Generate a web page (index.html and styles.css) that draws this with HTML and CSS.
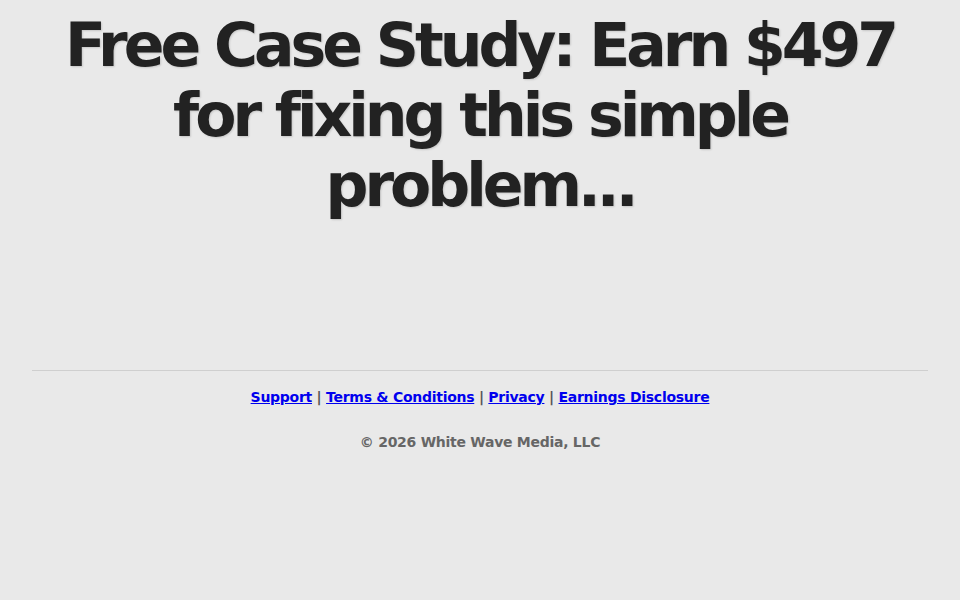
FILE: index.html
```html
<!DOCTYPE html>
<html>
<head>
<meta charset="utf-8">
<link rel="stylesheet" href="styles.css">
</head>
<body>
<div class="page">
  <h1 class="headline">Free Case Study: Earn $497 for fixing this simple problem...</h1>
  <div class="spacer"></div>
  <footer class="footer">
    <p class="links"><a href="#">Support</a> | <a href="#">Terms &amp; Conditions</a> | <a href="#">Privacy</a> | <a href="#">Earnings Disclosure</a></p>
    <p class="copy">© 2026 White Wave Media, LLC</p>
  </footer>
</div>
</body>
</html>
```
FILE: styles.css
```css
html, body {
  margin: 0;
  padding: 0;
  background: #e9e9e9;
}
body {
  font-family: "DejaVu Sans", sans-serif;
  color: #222;
}
.page {
  padding: 0 32px;
}
.headline {
  margin: 0;
  padding-top: 10px;
  font-size: 60px;
  line-height: 70px;
  letter-spacing: -4px;
  font-weight: bold;
  text-align: center;
  color: #222;
  text-shadow: 1px 1px 2px rgba(0,0,0,0.15);
}
.spacer {
  height: 150px;
}
.footer {
  border-top: 1px solid #cfcfcf;
  text-align: center;
  font-size: 14px;
  letter-spacing: -0.27px;
  font-weight: bold;
  padding-top: 18px;
}
.links {
  margin: 0;
  color: #555;
}
.links a {
  color: #0000ee;
  text-decoration: underline;
}
.copy {
  margin: 29px 0 0;
  color: #666;
}
```
